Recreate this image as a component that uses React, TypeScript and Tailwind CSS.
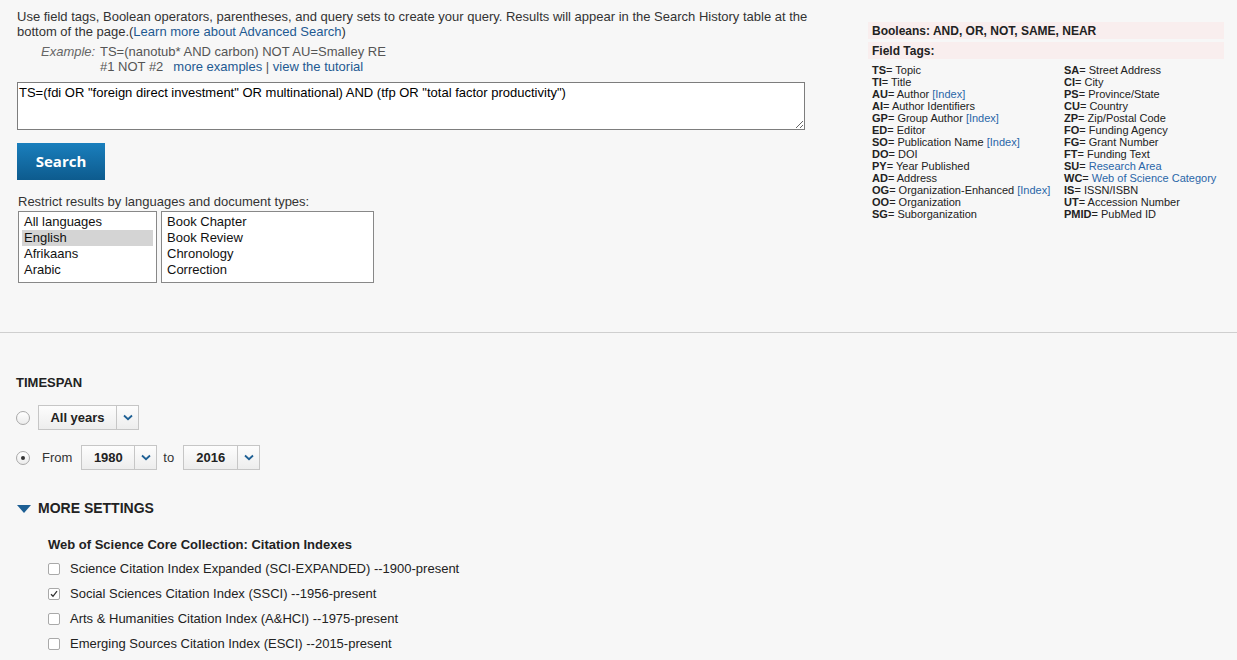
import React from 'react';

const leftTags: [string, string, boolean?][] = [
  ['TS', 'Topic'],
  ['TI', 'Title'],
  ['AU', 'Author', true],
  ['AI', 'Author Identifiers'],
  ['GP', 'Group Author', true],
  ['ED', 'Editor'],
  ['SO', 'Publication Name', true],
  ['DO', 'DOI'],
  ['PY', 'Year Published'],
  ['AD', 'Address'],
  ['OG', 'Organization-Enhanced', true],
  ['OO', 'Organization'],
  ['SG', 'Suborganization'],
];

// third item = label is a link
const rightTags: [string, string, boolean?][] = [
  ['SA', 'Street Address'],
  ['CI', 'City'],
  ['PS', 'Province/State'],
  ['CU', 'Country'],
  ['ZP', 'Zip/Postal Code'],
  ['FO', 'Funding Agency'],
  ['FG', 'Grant Number'],
  ['FT', 'Funding Text'],
  ['SU', 'Research Area', true],
  ['WC', 'Web of Science Category', true],
  ['IS', 'ISSN/ISBN'],
  ['UT', 'Accession Number'],
  ['PMID', 'PubMed ID'],
];

const indexes = [
  { label: 'Science Citation Index Expanded (SCI-EXPANDED) --1900-present', checked: false },
  { label: 'Social Sciences Citation Index (SSCI) --1956-present', checked: true },
  { label: 'Arts & Humanities Citation Index (A&HCI) --1975-present', checked: false },
  { label: 'Emerging Sources Citation Index (ESCI) --2015-present', checked: false },
];

function Chevron() {
  return (
    <svg width="10" height="7" viewBox="0 0 10 7">
      <path d="M1 1.5 L5 5.2 L9 1.5" fill="none" stroke="#1d5f94" strokeWidth="1.8" />
    </svg>
  );
}

function Select({ value, leftW }: { value: string; leftW: string }) {
  return (
    <div className="flex h-[25px] border border-[#c6c6c6] bg-gradient-to-b from-[#fdfdfd] to-[#ededed]">
      <div className={`${leftW} flex items-center justify-center border-r border-[#c6c6c6] font-bold text-[13px] text-[#222]`}>
        {value}
      </div>
      <div className="w-[21px] flex items-center justify-center">
        <Chevron />
      </div>
    </div>
  );
}

function Radio({ checked }: { checked?: boolean }) {
  return (
    <div className="w-[14px] h-[14px] rounded-full border border-[#a9a9a9] bg-gradient-to-b from-white to-[#ececec] flex items-center justify-center">
      {checked && <div className="w-[4px] h-[4px] rounded-full bg-[#333]" />}
    </div>
  );
}

export default function App() {
  return (
    <div className="min-h-screen bg-[#f7f7f7] font-['Liberation_Sans',Arial,sans-serif] text-[13px] text-[#333]">
      <div className="flex">
        {/* Query builder */}
        <div className="w-[866px] pl-[17px] pt-[9px]">
          <p className="leading-[15px] whitespace-nowrap">
            Use field tags, Boolean operators, parentheses, and query sets to create your query. Results will appear in the Search History table at the
            <br />
            bottom of the page.(<a className="text-[#1e5a92]">Learn more about Advanced Search</a>)
          </p>

          <div className="mt-[5px] flex leading-[15px]">
            <div className="ml-[24px] w-[59px] italic text-[#666]">Example:</div>
            <div className="text-[#555]">
              <div>TS=(nanotub* AND carbon) NOT AU=Smalley RE</div>
              <div>
                #1 NOT #2
                <span className="ml-[10px] text-[#1e5a92]">more examples</span>
                <span className="text-[#555]"> | </span>
                <span className="text-[#1e5a92]">view the tutorial</span>
              </div>
            </div>
          </div>

          <textarea
            readOnly
            defaultValue={'TS=(fdi OR "foreign direct investment" OR multinational) AND (tfp OR "total factor productivity")'}
            className="mt-[8px] block w-[788px] h-[48px] border border-[#7d7d7d] bg-white px-[1px] pt-[2px] pb-0 text-[13px] leading-[16px] text-black outline-none resize-y font-['Liberation_Sans',Arial,sans-serif]"
          />

          <button className="mt-[13px] w-[88px] h-[37px] bg-gradient-to-b from-[#1a7fbd] to-[#0d5b8e] text-white font-bold text-[15px] font-['Open_Sans',Arial,sans-serif]">
            Search
          </button>

          <div className="mt-[14px] leading-[15px] pl-[1px]">Restrict results by languages and document types:</div>

          <div className="mt-[2px] ml-[1px] flex gap-[4px] text-[13px] text-[#111]">
            <div className="w-[139px] h-[72px] border border-[#888] bg-white pt-[2px] px-[3px]">
              <div className="h-[16px] leading-[16px] pl-[2px]">All languages</div>
              <div className="h-[16px] leading-[16px] pl-[2px] bg-[#d4d4d4]">English</div>
              <div className="h-[16px] leading-[16px] pl-[2px]">Afrikaans</div>
              <div className="h-[16px] leading-[16px] pl-[2px]">Arabic</div>
            </div>
            <div className="w-[213px] h-[72px] border border-[#888] bg-white pt-[2px] px-[3px]">
              <div className="h-[16px] leading-[16px] pl-[2px]">Book Chapter</div>
              <div className="h-[16px] leading-[16px] pl-[2px]">Book Review</div>
              <div className="h-[16px] leading-[16px] pl-[2px]">Chronology</div>
              <div className="h-[16px] leading-[16px] pl-[2px]">Correction</div>
            </div>
          </div>
        </div>

        {/* Booleans / field tags reference */}
        <div className="w-[356px] pt-[22px] ml-[2px]">
          <div className="h-[17px] bg-[#f9eeee] px-[4px] flex items-center font-bold text-[12px] text-[#222]">
            Booleans: AND, OR, NOT, SAME, NEAR
          </div>
          <div className="mt-[3px] h-[17px] bg-[#f9eeee] px-[4px] flex items-center font-bold text-[12px] text-[#222]">
            Field Tags:
          </div>
          <div className="mt-[5px] pl-[4px] grid grid-cols-[192px_1fr] text-[11px] leading-[12px] text-[#222]">
            <div>
              {leftTags.map(([tag, label, idx]) => (
                <div key={tag}>
                  <b>{tag}</b>= {label}
                  {idx && <span className="text-[#2a66a8]"> [Index]</span>}
                </div>
              ))}
            </div>
            <div>
              {rightTags.map(([tag, label, link]) => (
                <div key={tag}>
                  <b>{tag}</b>= <span className={link ? 'text-[#2a66a8]' : ''}>{label}</span>
                </div>
              ))}
            </div>
          </div>
        </div>
      </div>

      <div className="mt-[49px] h-px bg-[#cfcfcf]" />

      {/* Timespan */}
      <div className="pl-[16px] pt-[42px]">
        <div className="font-bold text-[13px] leading-[15px] text-[#222]">TIMESPAN</div>

        <div className="mt-[15px] flex items-center">
          <Radio />
          <div className="ml-[8px]">
            <Select value="All years" leftW="w-[78px]" />
          </div>
        </div>

        <div className="mt-[15px] flex items-center">
          <Radio checked />
          <span className="ml-[12px] text-[#333]">From</span>
          <div className="ml-[9px]">
            <Select value="1980" leftW="w-[53px]" />
          </div>
          <span className="ml-[6px] text-[#333]">to</span>
          <div className="ml-[9px]">
            <Select value="2016" leftW="w-[54px]" />
          </div>
        </div>

        {/* More settings */}
        <div className="mt-[30px] flex items-center leading-[17px]">
          <svg width="14" height="8" viewBox="0 0 14 8" className="ml-[1px]">
            <path d="M0 0 H14 L7 8 Z" fill="#1d5f94" />
          </svg>
          <span className="ml-[7px] font-bold text-[14px] text-[#222]">MORE SETTINGS</span>
        </div>

        <div className="mt-[20px] ml-[32px] font-bold text-[13px] leading-[15px] text-[#222]">
          Web of Science Core Collection: Citation Indexes
        </div>

        <div className="mt-[4px] ml-[32px]">
          {indexes.map((item) => (
            <div key={item.label} className="h-[25px] flex items-center">
              <div className="w-[12px] h-[12px] rounded-[2px] border border-[#a9a9a9] bg-white flex items-center justify-center">
                {item.checked && (
                  <svg width="8" height="8" viewBox="0 0 8 8">
                    <path d="M1 4.2 L3 6.3 L7 1.2" fill="none" stroke="#333" strokeWidth="1.3" />
                  </svg>
                )}
              </div>
              <span className="ml-[10px] text-[#222]">{item.label}</span>
            </div>
          ))}
        </div>
      </div>
    </div>
  );
}
